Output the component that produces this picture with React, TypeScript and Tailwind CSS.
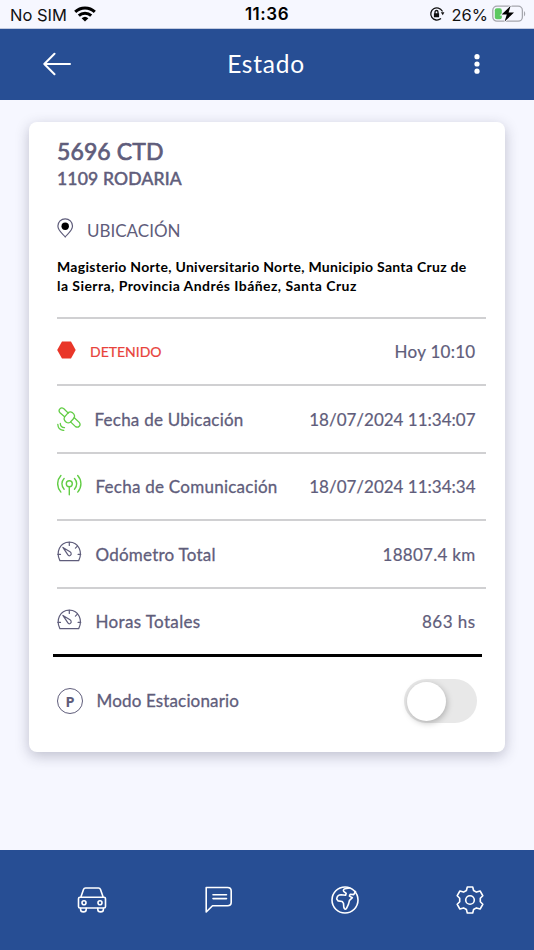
import React from "react";

const stroke = { fill: "none", strokeLinecap: "round", strokeLinejoin: "round" } as const;

function StatusBar() {
  return (
    <div className="flex h-[28.5px] items-center justify-between border-b border-[#c3cbe0] bg-[#f6f7ff] pl-[10px] pr-2 font-['Inter',sans-serif] text-[17px] leading-none text-[#111]">
      <div className="flex w-[180px] items-center gap-[7px]">
        <span className="pt-[2px] text-[16.5px]">No SIM</span>
        <svg width="22" height="16" viewBox="0 0 22 16" fill="none" stroke="#000" strokeWidth="3">
          <path d="M1.2 5.9a14 14 0 0 1 19.6 0" />
          <path d="M4.8 9.7a9 9 0 0 1 12.4 0" />
          <path d="M11 15.6l-3.4-3.3a5 5 0 0 1 6.8 0z" fill="#000" stroke="none" />
        </svg>
      </div>
      <span className="pr-[2px] pt-[2px] text-[17px] font-semibold tracking-[0.55px] text-black">11:36</span>
      <div className="flex w-[180px] items-center justify-end">
        <svg className="mr-[7px]" width="16" height="16" viewBox="0 0 16 16" {...stroke} stroke="#111" strokeWidth="1.3">
          <path d="M11.6 12.8A6.1 6.1 0 1 1 13.2 5" />
          <path d="M11.8 6.3h3.6l-1.6 3z" fill="#111" stroke="none" />
          <rect x="4.9" y="7.2" width="5.2" height="4" rx=".5" fill="#111" stroke="none" />
          <path d="M6 7.4V6a1.5 1.5 0 0 1 3 0v1.4" />
        </svg>
        <span className="pt-[2px] text-[16.5px]">26%</span>
        <svg className="ml-1" width="34" height="18" viewBox="0 0 34 18">
          <rect x=".8" y="1.2" width="29.6" height="15" rx="4.2" fill="none" stroke="#a5a6ad" strokeWidth="1.3" />
          <path d="M32 6.2c1.6.6 1.6 4.4 0 5z" fill="#a5a6ad" />
          <rect x="2.8" y="3.2" width="7" height="11" rx="2" fill="#5cc860" />
          <path d="M18.6.8 9.6 9.6h5.2l-2.2 7 9.4-9h-5.4z" fill="#000" stroke="#f6f7ff" strokeWidth="1.6" paintOrder="stroke" />
        </svg>
      </div>
    </div>
  );
}

function Header() {
  return (
    <header className="flex h-[71px] items-center justify-between bg-[#274e94] pl-[43px] pr-[53px] text-white">
      <svg width="28" height="24" viewBox="0 0 28 24" {...stroke} stroke="#fff" strokeWidth="2">
        <path d="M27 12H1.5M11.5 1.8 1.3 12l10.2 10.2" />
      </svg>
      <h1 className="pr-[12px] pt-px text-[24.5px] leading-none tracking-[0.75px]">Estado</h1>
      <svg width="8" height="24" viewBox="0 0 8 24" fill="#fff">
        <circle cx="4" cy="4.7" r="2.6" />
        <circle cx="4" cy="12" r="2.6" />
        <circle cx="4" cy="19.2" r="2.6" />
      </svg>
    </header>
  );
}

function Gauge() {
  return (
    <svg className="mb-[4px]" width="26" height="22" viewBox="0 0 26 22" {...stroke} stroke="#5f5d7b" strokeWidth="1.2">
      <path d="M2.900 19.600C-1.300 11.500 2.700 1.100 12.300 1.100s13.600 10.400 9.400 18.500z" />
      <path d="M12.300 1.300v3.100M.9 13.400h2.600M21.100 13.400h2.600M20.400 5.200l-2 2M5.900 6.400l5 7.500c1.200 1.800 3.900.4 3.200-1.800-.2-.6-.6-1-1.100-1.300z" />
    </svg>
  );
}

function Satellite() {
  return (
    <svg width="24" height="24" viewBox="0 0 24 24" {...stroke} stroke="#62cd45" strokeWidth="1.300">
      <path d="M7.600 9.800 3 5.700C.6 3.100 3.900-.4 6.600 1.500l4.700 4.600M17.100 10.500l5.100 4.900c2.300 2.700-.9 6-3.700 4.200l-4.700-4.500" />
      <path d="M11.300 5.600c1.300-.9 2.800-.8 4.100 0l1.500 1.500c.9 1.300.9 2.700.2 3.900l-3.900 4.300c-1.300.9-2.700.8-3.900 0l-1.500-1.500c-.9-1.300-.9-2.700-.2-3.900z" />
      <path d="M.8 17.300c.2 3.600 2.500 6 6 6.100M3.300 16.500c.1 2.500 1.600 4 4.200 4.200" />
    </svg>
  );
}

function Antenna() {
  return (
    <svg className="mb-[2px]" width="26" height="22" viewBox="0 0 26 22" {...stroke} stroke="#62cd45" strokeWidth="1.400">
      <circle cx="12.300" cy="9.800" r="3" />
      <path d="M12.300 12.800v8M7.100 4.400c-2.900 3-2.900 7.800 0 10.800M17.500 4.400c2.900 3 2.900 7.800 0 10.800M3.900 1.500c-4.300 4.800-4.300 11.800 0 16.600M20.700 1.500c4.300 4.800 4.300 11.800 0 16.600" />
    </svg>
  );
}

type RowProps = { icon: React.ReactNode; label: string; value: string; labelClass: string; valueClass: string };

function Row({ icon, label, value, labelClass, valueClass }: RowProps) {
  return (
    <div className="flex h-[67.6px] shrink-0 items-center border-t-2 border-[#d0d0d2] pr-[10.500px]">
      {icon}
      <span className={labelClass}>{label}</span>
      <span className={valueClass}>{value}</span>
    </div>
  );
}

const labelBase = "text-[17px] [-webkit-text-stroke:0.3px_#5f5d7b]";
const valueBase = "ml-auto text-[17px] [-webkit-text-stroke:0.2px_#5f5d7b]";

function Card() {
  return (
    <section className="ml-[28.5px] mt-[22px] flex h-[630px] w-[476.500px] flex-col rounded-[8px] bg-white pl-[28.500px] pr-[19px] pt-[16px] text-[#5f5d7b] shadow-[0_4px_14px_rgba(40,40,70,0.27)]">
      <h2 className="h-[29px] text-[23px] leading-[26px] tracking-[0.100px] [-webkit-text-stroke:0.700px_#5f5d7b]">5696 CTD</h2>
      <p className="h-[45px] text-[17.500px] leading-[24px] tracking-[0.200px] [-webkit-text-stroke:0.550px_#5f5d7b]">1109 RODARIA</p>
      <div className="flex h-[36px] items-center">
        <svg className="mb-[4px]" width="17" height="20" viewBox="0 0 17 20" fill="none" stroke="#5f5d7b" strokeWidth="1.200">
          <path d="M8.200 18.900C6.500 16.500.9 13 .9 8.100a7.300 7.300 0 0 1 14.600 0c0 4.900-5.600 8.400-7.300 10.800z" />
          <circle cx="8.200" cy="8.200" r="3.700" fill="#000" stroke="none" />
        </svg>
        <span className="ml-[13px] pt-[3px] text-[17px]">UBICACIÓN</span>
      </div>
      <div className="h-[69px] pt-[9px] text-[14px] leading-[19px] font-bold text-black">
        <div className="tracking-[0.290px]">Magisterio Norte, Universitario Norte, Municipio Santa Cruz de</div>
        <div className="tracking-[0.440px]">la Sierra, Provincia Andrés Ibáñez, Santa Cruz</div>
      </div>
      <Row
        icon={<svg className="mb-[2px]" width="19" height="18" viewBox="0 0 19 18" fill="#e93629"><path d="M5 .6h9L18.700 9 14 17.400H5L.2 9z" /></svg>}
        label="DETENIDO" value="Hoy 10:10"
        labelClass="ml-[14px] text-[14px] text-[#e8423b] [-webkit-text-stroke:0.200px_#e8423b]" valueClass={valueBase + " tracking-[0.280px]"}
      />
      <Row icon={<Satellite />} label="Fecha de Ubicación" value="18/07/2024 11:34:07" labelClass={labelBase + " pt-px ml-[13.500px] tracking-[0.230px]"} valueClass={valueBase + " pt-px"} />
      <Row icon={<Antenna />} label="Fecha de Comunicación" value="18/07/2024 11:34:34" labelClass={labelBase + " ml-[12.500px] tracking-[0.250px]"} valueClass={valueBase} />
      <Row icon={<Gauge />} label="Odómetro Total" value="18807.4 km" labelClass={labelBase + " pt-px ml-[12.500px] tracking-[0.230px]"} valueClass={valueBase + " pt-px tracking-[0.280px]"} />
      <Row icon={<Gauge />} label="Horas Totales" value="863 hs" labelClass={labelBase + " ml-[12.500px] tracking-[0.360px]"} valueClass={valueBase + " tracking-[0.450px]"} />
      <div className="-ml-[4px] mr-[4px] h-[3px] shrink-0 bg-black" />
      <div className="flex h-[88px] items-center pr-[9px]">
        <span className="flex size-[26px] items-center justify-center rounded-full border-[1.300px] border-[#5f5d7b] font-['Noto_Sans',sans-serif] text-[14.500px] font-bold">P</span>
        <span className={labelBase + " -mt-[2px] ml-[13.500px] tracking-[0.150px]"}>Modo Estacionario</span>
        <div className="ml-auto flex h-[44px] w-[73px] items-center rounded-full bg-[#e8e8e8] pl-[3px]">
          <div className="size-[39px] rounded-full bg-white shadow-[1px_2px_6px_rgba(0,0,0,0.250)]" />
        </div>
      </div>
    </section>
  );
}

function TabBar() {
  return (
    <nav className="mt-auto flex h-[100px] items-center justify-between bg-[#274e94] pl-[76px] pr-[50px]">
      <svg width="32" height="30" viewBox="0 0 32 30" {...stroke} stroke="#fff" strokeWidth="1.600">
        <path d="M4.800 12.300 7.500 4.500c.4-1.200 1-1.500 2-1.500h13c1 0 1.600.3 2 1.500l2.700 7.800M2.500 13.800c0-1 .5-1.500 1.500-1.500h24c1 0 1.500.5 1.500 1.500v7.700c0 1-.5 1.500-1.500 1.500H4c-1 0-1.500-.5-1.500-1.500z" />
        <path d="M4.600 23.300v1.200c0 1.700 1 2.400 2.800 2.400s2.800-.7 2.800-2.400v-1.200M21.800 23.300v1.200c0 1.700 1 2.400 2.800 2.400s2.800-.7 2.800-2.400v-1.200" />
        <circle cx="8" cy="17.700" r="2" /><circle cx="24" cy="17.700" r="2" />
      </svg>
      <svg width="28" height="28" viewBox="0 0 28 28" {...stroke} stroke="#fff" strokeWidth="1.600">
        <path d="M1.200 26V1.500h21.300c2.500 0 3.700 1.200 3.700 3.500v11.200c0 2.300-1.200 3.500-3.700 3.500H7.500zM8 8.700h13.500M8 12.600h13.500" />
      </svg>
      <svg width="28" height="28" viewBox="0 0 28 28" {...stroke} stroke="#fff" strokeWidth="1.600">
        <circle cx="14" cy="14" r="13" />
        <path d="M18.500 2 14 2.800c-1.500.4-2 1.300-1.300 2.500l2.500 2-.6 1.900-4.400-.5c-2.800 0-4.200 1.400-4.500 4.200l1.500 2 4 .6 1.300 1.900.3 3.800c.3 2 1.600 2.700 2.700 1.100l2-4.200 1-3.800 2.900-2.600-3-1.600.8-1.900 3.500.4 1.800-3.100" />
      </svg>
      <svg width="28" height="28" viewBox="0 0 28 28" {...stroke} stroke="#fff" strokeWidth="1.600">
        <path d="M11.300 1h5.400l.9 3.500 2.800 1.600 3.700-1.100 2.700 4.700-2.500 2.500v3.600l2.500 2.500-2.700 4.700-3.700-1.100-2.800 1.600-.9 3.500h-5.400l-.9-3.500-2.800-1.600L3.900 23l-2.700-4.700 2.500-2.500v-3.600L1.200 9.700 3.900 5l3.700 1.100 2.800-1.600z" />
        <circle cx="14" cy="14" r="4.300" />
      </svg>
    </nav>
  );
}

export default function App() {
  return (
    <div className="flex h-[950px] w-full flex-col overflow-hidden bg-[#f6f7ff] font-['Lato',sans-serif]">
      <StatusBar />
      <Header />
      <Card />
      <TabBar />
    </div>
  );
}
